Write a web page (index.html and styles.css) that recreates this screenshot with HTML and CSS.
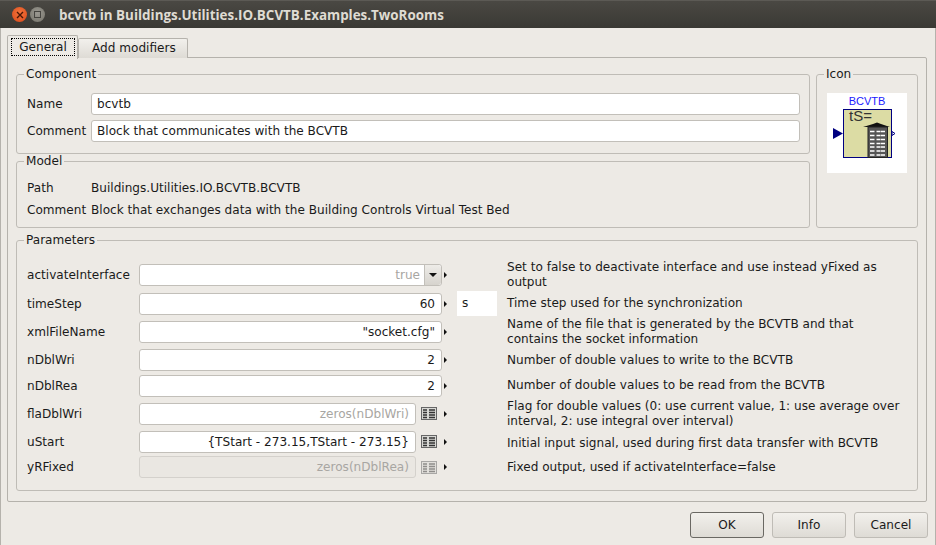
FILE: index.html
```html
<!DOCTYPE html>
<html lang="en">

<head>
    <meta charset="UTF-8">
    <meta name="viewport" content="width=device-width, initial-scale=1.0">
    <title>bcvtb in Buildings.Utilities.IO.BCVTB.Examples.TwoRooms</title>
    <link rel="stylesheet" href="styles.css">
</head>

<body>

    <header class="titlebar">
        <span class="win-btn win-close">
            <svg width="8" height="8" viewBox="0 0 8 8"><path d="M1 1L7 7M7 1L1 7" stroke="#4a1606" stroke-width="1.4"/></svg>
        </span>
        <span class="win-btn win-max"><span class="win-max-box"></span></span>
        <span class="win-title">bcvtb in Buildings.Utilities.IO.BCVTB.Examples.TwoRooms</span>
    </header>

    <div class="dialog">
        <div class="tabs">
            <div class="tab tab-active"><span class="tab-focus">General</span></div>
            <div class="tab">Add modifiers</div>
        </div>

        <div class="tab-pane">
            <div class="top-groups">
                <div class="left-groups">
                    <fieldset class="group group-component">
                        <legend>Component</legend>
                        <div class="field-row">
                            <label>Name</label>
                            <div class="input">bcvtb</div>
                        </div>
                        <div class="field-row">
                            <label>Comment</label>
                            <div class="input">Block that communicates with the BCVTB</div>
                        </div>
                    </fieldset>
                    <fieldset class="group group-model">
                        <legend>Model</legend>
                        <div class="info-row">
                            <label>Path</label>
                            <span>Buildings.Utilities.IO.BCVTB.BCVTB</span>
                        </div>
                        <div class="info-row">
                            <label>Comment</label>
                            <span>Block that exchanges data with the Building Controls Virtual Test Bed</span>
                        </div>
                    </fieldset>
                </div>
                <fieldset class="group group-icon">
                    <legend>Icon</legend>
                    <div class="icon-view">
                        <svg width="80" height="80" viewBox="0 0 80 80">
                            <text x="40" y="12" font-size="11" fill="#2020ff" text-anchor="middle" font-family="Liberation Sans, sans-serif">BCVTB</text>
                            <rect x="16.5" y="16.5" width="48" height="48" fill="#dcdca4" stroke="#000080" stroke-width="1"/>
                            <path d="M6 35L16 40.500L6 46Z" fill="#000080"/>
                            <path d="M65 38.500L68 40.500L65 42.500Z" fill="#fff" stroke="#000080"/>
                            <text x="22" y="28" font-size="15" fill="#333" font-family="Liberation Sans, sans-serif">tS=</text>
                            <path d="M36 34L46 31L50 29.500L54 31L63 34Z" fill="#111"/>
                            <rect x="41" y="34" width="19.500" height="30.500" fill="#555" stroke="#222"/>
                            <path d="M43 38.500h4.500M49.500 38.500h4M54 38.500h4M43 42.500h4.500M49.500 42.500h4M54 42.500h4M43 46.500h4.500M49.500 46.500h4M54 46.500h4M43 50.500h4.500M49.500 50.500h4M54 50.500h4M43 54h4.500M49.500 54h4M54 54h4M43 58h4.500M49.500 58h4M54 58h4M43 62h4.500M49.500 62h4M54 62h4" stroke="#fff" stroke-width="1.500"/>
                        </svg>
                    </div>
                </fieldset>
            </div>

            <fieldset class="group group-params">
                <legend>Parameters</legend>
                <div class="params">
                    <label>activateInterface</label>
                    <div class="input input-value input-combo"><span class="muted combo-text">true</span><span class="combo-arrow"></span></div>
                    <span class="mini-arrow"></span>
                    <span></span>
                    <p>Set to false to deactivate interface and use instead yFixed as output</p>

                    <label>timeStep</label>
                    <div class="input input-value">60</div>
                    <span class="mini-arrow"></span>
                    <span class="unit">s</span>
                    <p>Time step used for the synchronization</p>

                    <label>xmlFileName</label>
                    <div class="input input-value">"socket.cfg"</div>
                    <span class="mini-arrow"></span>
                    <span></span>
                    <p>Name of the file that is generated by the BCVTB and that contains the socket information</p>

                    <label>nDblWri</label>
                    <div class="input input-value">2</div>
                    <span class="mini-arrow"></span>
                    <span></span>
                    <p>Number of double values to write to the BCVTB</p>

                    <label>nDblRea</label>
                    <div class="input input-value">2</div>
                    <span class="mini-arrow"></span>
                    <span></span>
                    <p>Number of double values to be read from the BCVTB</p>

                    <label>flaDblWri</label>
                    <div class="input-with-table">
                        <div class="input input-value muted">zeros(nDblWri)</div>
                        <svg class="table-icon" width="16" height="13" viewBox="0 0 16 13"><use href="#tbl"/></svg>
                    </div>
                    <span class="mini-arrow"></span>
                    <span></span>
                    <p>Flag for double values (0: use current value, 1: use average over interval, 2: use integral over interval)</p>

                    <label>uStart</label>
                    <div class="input-with-table">
                        <div class="input input-value">{TStart - 273.15,TStart - 273.15}</div>
                        <svg class="table-icon" width="16" height="13" viewBox="0 0 16 13"><use href="#tbl"/></svg>
                    </div>
                    <span class="mini-arrow"></span>
                    <span></span>
                    <p class="desc-low">Initial input signal, used during first data transfer with BCVTB</p>

                    <label>yRFixed</label>
                    <div class="input-with-table is-disabled">
                        <div class="input input-value muted">zeros(nDblRea)</div>
                        <svg class="table-icon" width="16" height="13" viewBox="0 0 16 13"><use href="#tbl"/></svg>
                    </div>
                    <span class="mini-arrow"></span>
                    <span></span>
                    <p>Fixed output, used if activateInterface=false</p>
                </div>
            </fieldset>
        </div>

        <div class="buttons">
            <button class="btn btn-default">OK</button>
            <button class="btn">Info</button>
            <button class="btn">Cancel</button>
        </div>
    </div>

    <svg width="0" height="0" class="svg-defs">
        <defs>
            <g id="tbl">
                <rect x="0.5" y="0.5" width="15" height="12" fill="#d8d8d4" stroke="#666"/>
                <path d="M2 3h4M2 5.500h4M2 8h4M2 10.500h4M8 3h6M8 5.500h6M8 8h6M8 10.500h6" stroke="#333" stroke-width="1.500"/>
            </g>
        </defs>
    </svg>

</body>

</html>
```

FILE: styles.css
```css
/* General Styles */

html,
body {
    margin: 0;
    padding: 0;
}

body {
    width: 936px;
    height: 545px;
    overflow: hidden;
    background-color: #edeae5;
    font-family: "DejaVu Sans", sans-serif;
    font-size: 12.08px;
    color: #1a1a1a;
}

/* Window title bar */

.titlebar {
    height: 28px;
    display: flex;
    align-items: center;
    padding-left: 12px;
    background: linear-gradient(#4a4843, #3a3934);
    border-top: 1px solid #5c5a55;
    box-sizing: border-box;
}

.win-btn {
    width: 15px;
    height: 15px;
    border-radius: 50%;
    display: flex;
    align-items: center;
    justify-content: center;
    margin-right: 3px;
}

.win-close {
    background: radial-gradient(circle at 50% 40%, #f4753c, #d8481a);
}

.win-max {
    background: radial-gradient(circle at 50% 40%, #9a9891, #757369);
}

.win-max-box {
    width: 5px;
    height: 5px;
    border: 1px solid #45443f;
}

.win-title {
    margin-left: 11px;
    font-family: "Open Sans", sans-serif;
    font-weight: 700;
    font-size: 13.4px;
    color: #dfdbd2;
}

/* Dialog */

.dialog {
    height: 517px;
    padding: 7px 8px 0 6px;
    box-sizing: border-box;
    border-left: 1px solid #b5b2ac;
    border-right: 1px solid #b5b2ac;
}

.tabs {
    display: flex;
    height: 22px;
    align-items: flex-start;
}

.tab {
    height: 19px;
    margin-top: 3px;
    padding: 0 11px 0 13px;
    line-height: 18px;
    background: linear-gradient(#f2f0ec, #dedbd5);
    border: 1px solid #b5b2ac;
    border-bottom: none;
    border-radius: 2px 2px 0 0;
}

.tab-active {
    width: 69px;
    height: 23px;
    margin-top: 0;
    padding: 0;
    background: #edeae5;
    position: relative;
    z-index: 1;
}

.tab-focus {
    display: block;
    width: 62px;
    height: 16px;
    line-height: 16px;
    margin: 2px 0 0 3px;
    border: 1px dotted #000;
    text-align: center;
}

.tab-pane {
    height: 445px;
    box-sizing: border-box;
    border: 1px solid #b5b2ac;
    border-radius: 2px;
    padding: 9px 8px 0 8px;
}

.top-groups {
    display: flex;
    gap: 6px;
}

.left-groups {
    width: 794px;
    display: flex;
    flex-direction: column;
}

.group {
    margin: 0;
    padding: 0;
    border: 1px solid #bfbcb6;
    border-radius: 3px;
    box-sizing: border-box;
    position: relative;
    min-width: 0;
}

.group legend {
    padding: 0 2px;
    margin-left: 7px;
    line-height: 14px;
    color: #1a1a1a;
}

.group-component {
    height: 87px;
}

.group-model {
    height: 74px;
}

.group-icon {
    width: 102px;
    height: 161px;
}

.group-params {
    margin-top: 5px;
    height: 258px;
}

.field-row {
    display: flex;
    align-items: center;
    height: 22px;
    margin-bottom: 5px;
    padding: 0 9px 0 10px;
}

.field-row:first-of-type {
    margin-top: 12px;
}

.field-row label {
    width: 64px;
}

.input {
    flex: 1;
    height: 22px;
    line-height: 20px;
    box-sizing: border-box;
    border: 1px solid #c2bfb9;
    border-radius: 3px;
    background-color: #fff;
    padding: 0 5px;
    white-space: nowrap;
}

.info-row {
    display: flex;
    height: 22px;
    line-height: 22px;
    padding-left: 10px;
}

.info-row:first-of-type {
    margin-top: 9px;
}

.info-row label {
    width: 64px;
}

.icon-view {
    width: 80px;
    height: 80px;
    margin: 12px 0 0 10px;
    background-color: #fff;
}

.icon-view svg {
    display: block;
}

/* Parameter grid */

.params {
    display: grid;
    grid-template-columns: 112px 303px 15px 40px 1fr;
    grid-template-rows: 29px 29px 27px 30px 21px 35px 21px 30px;
    padding: 13px 0 0 10px;
    align-items: center;
}

.params p {
    margin: 0 14px 0 10px;
    line-height: 15px;
}

.params .desc-low {
    margin-top: 4px;
}

.input-value {
    text-align: right;
    padding-right: 6px;
}

.params > .input,
.input-with-table {
    height: 22px;
}

.input-combo {
    display: flex;
    padding: 0;
}

.combo-text {
    flex: 1;
    padding-right: 4px;
}

.combo-arrow {
    width: 16px;
    background: linear-gradient(#eeece8, #d6d3cd);
    border-left: 1px solid #c2bfb9;
    border-radius: 0 3px 3px 0;
    position: relative;
}

.combo-arrow::after {
    content: "";
    position: absolute;
    left: 4px;
    top: 8px;
    border-left: 4px solid transparent;
    border-right: 4px solid transparent;
    border-top: 4px solid #111;
}

.muted {
    color: #a8a6a2;
}

.mini-arrow {
    width: 0;
    height: 0;
    margin-left: 2px;
    border-top: 3px solid transparent;
    border-bottom: 3px solid transparent;
    border-left: 3px solid #111;
}

.unit {
    background-color: #fff;
    height: 25px;
    line-height: 25px;
    padding-left: 5px;
}

.input-with-table {
    display: flex;
    align-items: center;
    gap: 5px;
}

.input-with-table .input {
    flex: none;
    width: 277px;
}

.table-icon {
    flex: none;
}

.is-disabled .input {
    background-color: #eae7e2;
    border-color: #d4d1cc;
}

.is-disabled .table-icon {
    opacity: 0.5;
}

.svg-defs {
    position: absolute;
}

/* Bottom buttons */

.buttons {
    display: flex;
    justify-content: flex-end;
    gap: 8px;
    padding-top: 10px;
    margin-right: -1px;
}

.btn {
    width: 74px;
    height: 26px;
    font-family: inherit;
    font-size: 12.08px;
    color: #1a1a1a;
    background: linear-gradient(#f2f0ec, #dedbd5);
    border: 1px solid #bfbcb6;
    border-radius: 3px;
    padding: 0;
}

.btn-default {
    border-color: #6a6863;
}
```
